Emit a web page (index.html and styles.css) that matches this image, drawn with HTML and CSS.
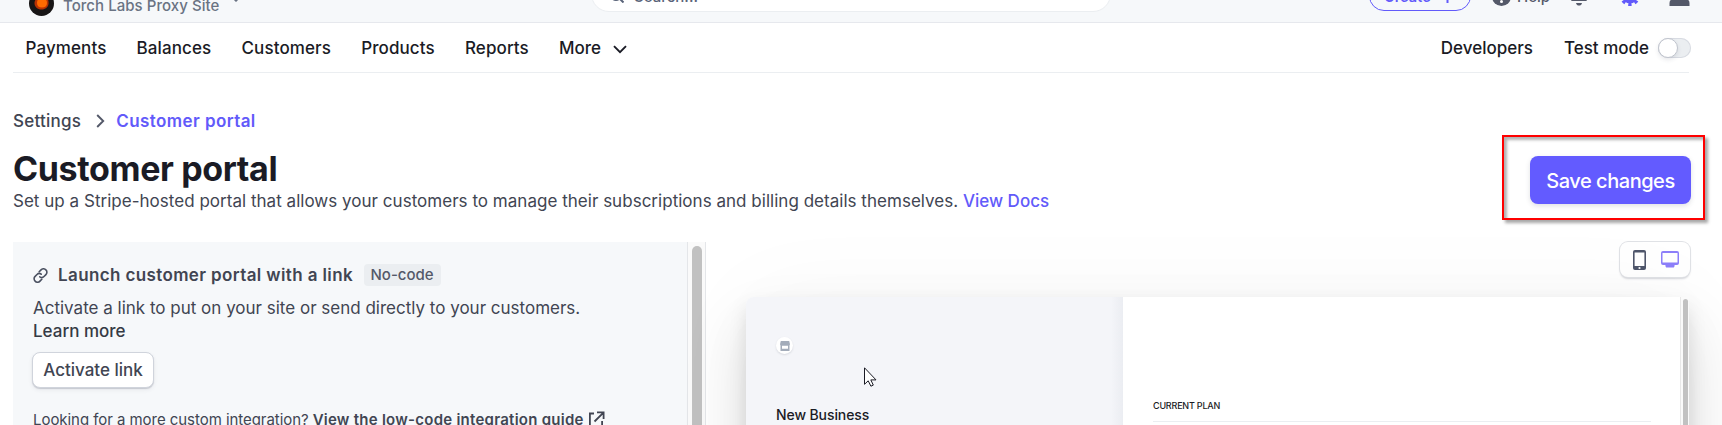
FILE: index.html
```
<!DOCTYPE html>
<html lang="en">
<head>
<meta charset="utf-8">
<title>Customer portal</title>
<link rel="stylesheet" href="styles.css">
</head>
<body>
<header class="topbar">
  <div class="account">
    <svg class="avatar" width="25" height="25" viewBox="0 0 25 25"><circle cx="12.5" cy="12.5" r="12.5" fill="#181616"/><path d="M5.500 12c0-4 4-7 8-7s6.500 3 6 8c-.5 3-3 5.500-7 5.500S5.500 16 5.500 12z" fill="#b83203"/><path d="M8 12c0-3 2-6 5-5 3 0 5 2 5 5s-2 4.500-5 4.500-5-1.500-5-4.500z" fill="#ff6a00"/></svg>
    <span class="account-name">Torch Labs Proxy Site</span>
    <svg class="account-caret" width="6" height="4" viewBox="0 0 6 4"><path d="M0 0l3 3 3-3" fill="none" stroke="#6a7383" stroke-width="1.500"/></svg>
  </div>
  <div class="search">
    <svg class="search-icon" width="14" height="14" viewBox="0 0 14 14" fill="none" stroke="#596379" stroke-width="2"><circle cx="6" cy="6" r="5"/><path d="M9.500 9.500l4 4"/></svg>
    <span>Search...</span>
  </div>
  <div class="tools">
    <div class="create"><span>Create</span><svg width="11" height="11" viewBox="0 0 11 11"><path d="M5.500 0v11M0 5.500h11" stroke="#625afa" stroke-width="2"/></svg></div>
    <svg class="help-icon" width="19" height="19" viewBox="0 0 19 19"><circle cx="9.500" cy="9.500" r="9.500" fill="#545969"/><path d="M6.500 7c0-4 6-4 6-.5 0 2.500-3 2.200-3 5" fill="none" stroke="#fff" stroke-width="2"/><circle cx="9.500" cy="14.500" r="1.500" fill="#fff"/></svg>
    <span class="help">Help</span>
    <svg class="bell" width="18" height="20" viewBox="0 0 18 20" fill="#545969"><path d="M1 15l2-3V7c0-8 12-8 12 0v5l2 3z"/><path d="M6 17h6c-.5 2-1.500 2.500-3 2.500S6.500 19 6 17z"/></svg>
    <svg class="gear" width="20" height="20" viewBox="0 0 20 20"><circle cx="10" cy="10" r="5.500" fill="none" stroke="#625afa" stroke-width="4"/><circle cx="10" cy="10" r="8" fill="none" stroke="#625afa" stroke-width="4" stroke-dasharray="3.142 3.142" stroke-dashoffset="1.570"/></svg>
    <svg class="person" width="21" height="20" viewBox="0 0 21 20" fill="#545969"><circle cx="10.500" cy="5" r="5"/><path d="M.5 20v-3c0-3 3-5 6-5h8c3 0 6 2 6 5v3z"/></svg>
  </div>
</header>

<nav class="nav">
  <div class="nav-links">
    <span>Payments</span><span>Balances</span><span>Customers</span><span>Products</span><span>Reports</span>
    <span class="more">More<svg width="14" height="9" viewBox="0 0 14 9"><path d="M1 1.200l6 6 6-6" fill="none" stroke="#1a1b25" stroke-width="1.900"/></svg></span>
  </div>
  <div class="nav-side">
    <span>Developers</span>
    <span>Test mode</span>
    <span class="toggle"><span class="knob"></span></span>
  </div>
</nav>

<main>
  <section class="head">
    <div>
      <div class="crumbs">
        <span class="crumb-settings">Settings</span>
        <svg width="9" height="14" viewBox="0 0 9 14"><path d="M1.200 1l6 6-6 6" fill="none" stroke="#545969" stroke-width="1.900"/></svg>
        <span class="crumb-current">Customer portal</span>
      </div>
      <h1>Customer portal</h1>
      <p class="desc">Set up a Stripe-hosted portal that allows your customers to manage their subscriptions and billing details themselves. <a>View Docs</a></p>
    </div>
    <div class="save">Save changes<div class="callout"></div></div>
  </section>

  <section class="columns">
    <div class="config">
      <div class="config-body">
        <div class="config-title">
          <svg width="15" height="15" viewBox="0 0 15 15" fill="none" stroke="#4a5060" stroke-width="1.600" stroke-linecap="round"><path d="M6.200 3.700L8 1.900a3.250 3.250 0 0 1 4.900 0 3.250 3.250 0 0 1 0 4.700L11 8.500a3.250 3.250 0 0 1-4.200.3"/><path d="M8.800 11.300L7 13.100a3.250 3.250 0 0 1-4.900 0 3.250 3.250 0 0 1 0-4.700L4 6.500a3.250 3.250 0 0 1 4.200-.3"/></svg>
          <span class="config-name">Launch customer portal with a link</span>
          <span class="badge">No-code</span>
        </div>
        <p class="copy">Activate a link to put on your site or send directly to your customers.</p>
        <p class="learn">Learn more</p>
        <div class="activate">Activate link</div>
        <p class="guide"><span>Looking for a more custom integration?</span><b>View the low-code integration guide</b><svg width="17" height="17" viewBox="0 0 17 17" fill="none" stroke="#414552" stroke-width="1.800"><path d="M6 2.500H1.900V15.100H14.100V10M9 1.400h6.600V8M15.200 1.800L6.500 10.500"/></svg></p>
      </div>
      <div class="scroll"><div class="thumb"></div></div>
    </div>

    <div class="preview-area">
      <div class="devices">
        <svg width="13" height="20" viewBox="0 0 13 20"><rect width="13" height="20" rx="2" fill="#4f566b"/><path d="M1.600 2.500h9.800v13.500H1.600z" fill="#fff"/><circle cx="6.500" cy="18" r="1.100" fill="#fff"/></svg>
        <svg width="18" height="17" viewBox="0 0 18 17"><path fill-rule="evenodd" d="M2 0h14a2 2 0 0 1 2 2v10a2 2 0 0 1-2 2h-2.500c.2 1 .2 1.500-.7 2.500H5.200c-.9-1-.9-1.500-.7-2.500H2a2 2 0 0 1-2-2V2a2 2 0 0 1 2-2zm-.5 2v9.500h15V2z" fill="#8d7ffa"/></svg>
      </div>
      <div class="preview">
        <div class="preview-brand">
          <div class="shop"><svg width="10" height="10" viewBox="0 0 10 10"><path fill-rule="evenodd" d="M.8 0h8.400L10 3.200 9.500 4.500V10H.5V4.500L0 3.200zM2 4.700v3h6v-3z" fill="#a3acba"/></svg></div>
          <div class="business">New Business</div>
        </div>
        <div class="preview-plan"><div class="plan-title">CURRENT PLAN</div></div>
        <div class="preview-scroll"><div class="preview-thumb"></div></div>
        <svg class="pointer" width="13" height="20" viewBox="0 0 13 20"><path d="M.5.800v16.500l3.700-3.500 2.700 5.400 2.400-1.100-2.500-5.200h5.200z" fill="#fff" stroke="#1a1b25"/></svg>
      </div>
    </div>
  </section>
</main>
</body>
</html>
```
FILE: styles.css
```
* { box-sizing: border-box; }
html { overflow: hidden; }
body {
  margin: 0;
  height: 425px;
  overflow: hidden;
  background: #fff;
  color: #1a1b25;
  font: 500 17px/24px Inter, "Liberation Sans", sans-serif;
}
svg { display: block; flex: none; }
h1, p { margin: 0; }
span, b { white-space: nowrap; }

/* top bar */
.topbar {
  display: grid;
  grid-template: 22px / 591px 520px 1fr;
  height: 23px;
  overflow: hidden;
  background: #f6f8fa;
  border-bottom: 1px solid #e6e8ed;
}
.account, .tools { display: flex; align-items: flex-end; height: 22px; }
.account { padding-left: 29px; }
.avatar { margin-bottom: 6px; }
.account-name {
  margin: 0 0 6px 9px;
  font-size: 15px;
  line-height: 20px;
  letter-spacing: .05px;
  color: #6a7383;
}
.account-caret { margin: 0 0 20px 14px; }
.search {
  display: flex;
  align-items: flex-end;
  gap: 10px;
  align-self: end;
  height: 36px;
  margin-bottom: 10px;
  padding: 0 0 4px 18px;
  border: 1px solid #ebeef1;
  border-radius: 18px;
  background: #fff;
  color: #596379;
  font-size: 15px;
  line-height: 20px;
}
.search-icon { margin-bottom: 4px; }
.tools { padding-left: 258px; color: #545969; }
.create {
  display: flex;
  align-items: flex-end;
  gap: 11px;
  width: 102px;
  height: 30px;
  margin-bottom: 11px;
  padding: 0 0 3px 14px;
  border: 1.500px solid #625afa;
  border-radius: 15px;
  color: #625afa;
  font-size: 14.500px;
  font-weight: 600;
  line-height: 20px;
}
.create svg { margin-bottom: 4px; }
.help-icon { margin: 0 0 16px 21px; }
.help { margin: 0 0 15px 6px; font-size: 15px; line-height: 20px; }
.bell { margin: 0 0 16px 20px; }
.gear { margin: 0 0 16px 32px; }
.person { margin: 0 0 16px 29px; }

/* navigation */
.nav {
  display: flex;
  justify-content: space-between;
  height: 50px;
  margin: 0 33px 0 13px;
  padding: 13px 0 0 12.500px;
  border-bottom: 1px solid #ebeef1;
  letter-spacing: .1px;
}
.nav-links { display: flex; gap: 30.200px; }
.more { display: flex; letter-spacing: -.05px; }
.more svg { margin: 9px 0 0 12px; }
.nav-side { display: flex; letter-spacing: 0; gap: 31px; margin-right: -2px; }
.toggle {
  width: 33px;
  height: 20px;
  margin: 2px 0 0 -22px;
  border-radius: 10px;
  background: #ebeef1;
  box-shadow: inset 0 0 0 1px #d8dbe2;
}
.knob {
  display: block;
  width: 20px;
  height: 20px;
  border: 1px solid #c0c4cd;
  border-radius: 50%;
  background: #fff;
  box-shadow: 0 2px 4px rgba(60, 66, 87, .12);
}

/* page heading */
main { padding: 0 0 0 13px; }
.head {
  display: flex;
  justify-content: space-between;
  height: 169px;
  padding: 36px 31px 0 0;
}
.crumbs { display: flex; align-items: center; color: #414552; }
.crumbs svg { margin: 0 11.500px 0 14.500px; }
.crumb-settings { letter-spacing: .25px; }
.crumb-current { color: #625afa; font-weight: 600; letter-spacing: .42px; }
h1 {
  margin-top: 15.500px;
  font-size: 34px;
  font-weight: 700;
  line-height: 40px;
  letter-spacing: -.37px;
}
.desc { color: #414552; font-weight: 400; letter-spacing: .025px; white-space: nowrap; }
.desc a { color: #625afa; font-weight: 500; letter-spacing: 0; }
.save {
  position: relative;
  width: 161px;
  height: 48px;
  margin-top: 47px;
  border-radius: 8px;
  background: #635bff;
  box-shadow: 0 2px 5px rgba(60, 66, 87, .16);
  color: #fff;
  font-size: 20px;
  line-height: 50px;
  letter-spacing: -.47px;
  text-align: center;
}
/* highlight frame around the save button */
.callout {
  position: absolute;
  inset: -21px -14px -16px -28px;
  border: 2px solid #f00;
  box-shadow: 3px 3px 3px rgba(0, 0, 0, .35), inset 3px 3px 3px rgba(0, 0, 0, .3);
}

/* settings column */
.columns { display: grid; grid-template-columns: 693px 1fr; height: 183px; }
.config { display: flex; background: #f6f8fa; }
.config-body { width: 674px; padding: 21px 0 0 20px; color: #414552; }
.config-title { display: flex; align-items: center; height: 24px; }
.config-name { margin-left: 10px; font-weight: 600; letter-spacing: .38px; }
.badge {
  height: 22px;
  margin-left: 10.500px;
  padding: 0 7px;
  border-radius: 4px;
  background: #ebeef1;
  color: #545969;
  font-size: 15px;
  line-height: 22px;
}
.copy { margin-top: 10px; font-weight: 400; line-height: 23px; }
.learn { line-height: 23px; color: #353a44; }
.activate {
  width: 122px;
  height: 36px;
  margin: 9px 0 0 -1px;
  border: 1px solid #d0d4dc;
  border-radius: 8px;
  background: #fff;
  box-shadow: 0 1px 1px rgba(60, 66, 87, .2), 0 2px 4px rgba(60, 66, 87, .08);
  line-height: 35px;
  text-align: center;
}
.guide {
  display: flex;
  margin: 22px 0 0;
  font-size: 15px;
  font-weight: 400;
  line-height: 20px;
  letter-spacing: -.05px;
}
.guide b { margin-left: 4px; font-weight: 600; letter-spacing: .25px; }
.guide svg { margin: 1px 0 0 4px; }
.scroll {
  width: 19px;
  padding: 4px 0 0 4px;
  border: solid #e4e6e9;
  border-width: 0 1px;
  background: #fafafa;
}
.thumb { width: 10px; height: 190px; border-radius: 5px; background: #c1c1c1; }

/* portal preview */
.preview-area { padding-left: 40px; }
.devices {
  display: flex;
  align-items: center;
  gap: 15px;
  width: 70px;
  height: 35px;
  margin: 0 0 20px 873.500px;
  padding-left: 13.500px;
  border-radius: 8px;
  background: #fff;
  box-shadow: 0 0 0 1px #e0e2e6, 0 2px 2px rgba(60, 66, 87, .22);
}
.preview {
  position: relative;
  display: grid;
  grid-template-columns: 377px 1fr 9px;
  width: 943px;
  height: 400px;
  border-radius: 8px 0 0 0;
  background: #fff;
  box-shadow: 0 30px 60px rgba(0, 0, 0, .12), 0 10px 18px rgba(0, 0, 0, .1), 0 0 100px rgba(0, 0, 0, .035);
}
.preview-brand {
  padding: 40px 0 0 30px;
  border-radius: 8px 0 0 0;
  background: linear-gradient(90deg, rgba(235, 237, 242, 0) 365px, #ebedf2 377px) #f4f5f9;
}
.shop {
  display: grid;
  place-items: center;
  width: 17px;
  height: 17px;
  border-radius: 50%;
  background: #fff;
  box-shadow: 0 1px 2px rgba(60, 66, 87, .16);
}
.business { margin-top: 51px; font-size: 14px; line-height: 20px; letter-spacing: -.1px; }
.preview-plan { padding: 102px 29px 0 30px; }
.plan-title {
  height: 23px;
  border-bottom: 1px solid #ebeef1;
  font-size: 9px;
  line-height: 14px;
  letter-spacing: -.2px;
}
.preview-scroll { padding: 2px 0 0 2px; border-left: 1px solid #e8e8e8; background: #fafafa; }
.preview-thumb { width: 5px; height: 390px; border-radius: 3px; background: #c1c1c1; }
.pointer { position: absolute; left: 118px; top: 70px; }
```
